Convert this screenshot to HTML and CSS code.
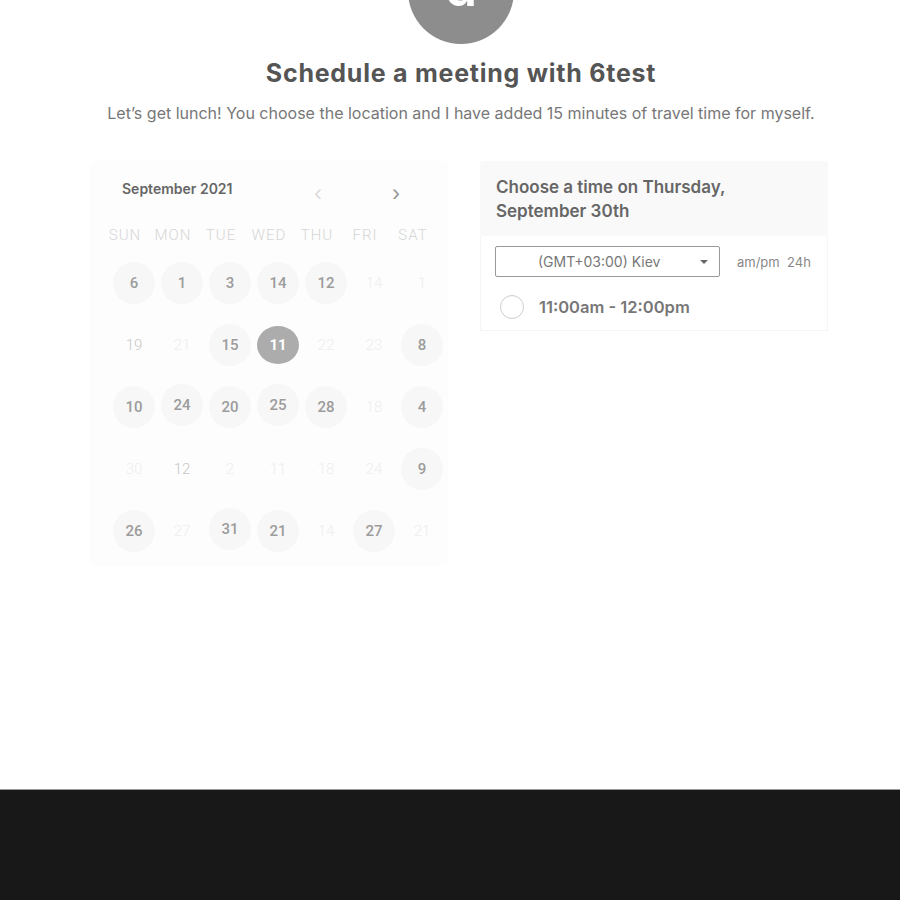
FILE: index.html
```html
<!DOCTYPE html>
<html>
<head>
<meta charset="utf-8">
<link rel="stylesheet" href="styles.css">
</head>
<body>
<main class="page">
  <div class="avatar"><span>d</span></div>
  <h1 class="title">Schedule a meeting with 6test</h1>
  <p class="subtitle">Let’s get lunch! You choose the location and I have added 15 minutes of travel time for myself.</p>
  <div class="columns">
    <section class="calendar">
      <div class="cal-head">
        <span class="month">September 2021</span>
        <span class="arrow prev">&lsaquo;</span>
        <span class="arrow next">&rsaquo;</span>
      </div>
      <div class="weekdays">
        <span>SUN</span><span>MON</span><span>TUE</span><span>WED</span><span>THU</span><span>FRI</span><span>SAT</span>
      </div>
      <div class="days">
        <span class="d pill">6</span><span class="d pill">1</span><span class="d pill">3</span><span class="d pill">14</span><span class="d pill">12</span><span class="d off">14</span><span class="d off">1</span>
        <span class="d dim">19</span><span class="d off">21</span><span class="d pill">15</span><span class="d sel">11</span><span class="d off">22</span><span class="d off">23</span><span class="d pill">8</span>
        <span class="d pill">10</span><span class="d pill up">24</span><span class="d pill">20</span><span class="d pill up">25</span><span class="d pill">28</span><span class="d off">18</span><span class="d pill">4</span>
        <span class="d off">30</span><span class="d dim">12</span><span class="d off">2</span><span class="d off">11</span><span class="d off">18</span><span class="d off">24</span><span class="d pill">9</span>
        <span class="d pill">26</span><span class="d off">27</span><span class="d pill up">31</span><span class="d pill">21</span><span class="d off">14</span><span class="d pill">27</span><span class="d off">21</span>
      </div>
    </section>
    <section class="times">
      <div class="times-head">Choose a time on Thursday,<br>September 30th</div>
      <div class="times-body">
        <div class="tz-row">
          <div class="select"><span>(GMT+03:00) Kiev</span><span class="caret"></span></div>
          <span class="fmt">am/pm&nbsp; 24h</span>
        </div>
        <div class="slot"><span class="radio"></span><span class="slot-text">11:00am - 12:00pm</span></div>
      </div>
    </section>
  </div>
</main>
<footer class="footer"></footer>
</body>
</html>
```
FILE: styles.css
```css
html, body { margin: 0; padding: 0; background: #fff; }
body { font-family: Inter, "Liberation Sans", Arial, sans-serif; overflow: hidden; }
.page { height: 789px; overflow: hidden; display: flex; flex-direction: column; align-items: center; }
.avatar {
  width: 106px; height: 106px; border-radius: 50%; background: #8d8d8d;
  margin-top: -62px; margin-left: 22px; flex: none;
  display: flex; justify-content: center; align-items: center; overflow: hidden;
}
.avatar span { color: #fff; font-family: Inter, "Liberation Sans", sans-serif; font-size: 52px; font-weight: 600; line-height: 1; margin-top: -6px; }
.title {
  margin: 14px 0 0 22px; font-size: 25px; font-weight: 700; color: #555;
  line-height: 30px; letter-spacing: 0.75px;
}
.subtitle { margin: 14px 0 0 22px; font-size: 16px; color: #777; line-height: 22px; font-weight: 400; }
.columns { display: flex; gap: 32px; margin-top: 37px; margin-left: 18px; align-items: flex-start; }
.calendar { width: 338px; padding: 16px 0 4px 20px; background: #fdfdfd; border-radius: 6px; }
.cal-head { display: flex; align-items: center; height: 22px; }
.month { font-size: 14px; font-weight: 600; color: #666; margin-left: 12px; width: 192px; }
.arrow { font-size: 24px; line-height: 22px; margin-top: 9px; font-family: "Liberation Sans", Arial, sans-serif; }
.prev { color: #ddd; width: 78px; }
.next { color: #999; }
.weekdays { display: grid; grid-template-columns: repeat(7, 48px); margin-top: 21px; margin-left: -9px; height: 30px; align-items: center; }
.weekdays span { text-align: center; font-family: Roboto, sans-serif; font-size: 15px; font-weight: 300; color: #d6d6d6; letter-spacing: 1px; }
.days { display: grid; grid-template-columns: repeat(7, 48px); grid-auto-rows: 62px; align-items: center; justify-items: center; margin-top: 2px; }
.d { width: 42px; height: 42px; border-radius: 50%; display: flex; align-items: center; justify-content: center; font-size: 15px; font-family: Roboto, sans-serif; }
.pill { background: #f7f7f7; color: #9c9c9c; font-weight: 500; }
.up { transform: translateY(-2px); }
.sel { background: #acacac; color: #fff; font-weight: 700; height: 38px; width: 42px; }
.dim { color: #c8c8c8; font-weight: 300; }
.off { color: #eee; font-weight: 300; }
.times { width: 348px; }
.times-head { background: #f9f9f9; padding: 14px 16px 13px; font-size: 17px; font-weight: 600; color: #666; line-height: 24px; border-radius: 4px; }
.times-body { background: #fff; border: 1px solid #f5f5f5; border-top: none; padding: 10px 14px 11px 14px; }
.tz-row { display: flex; align-items: center; }
.select {
  width: 223px; height: 29px; border: 1px solid #999; border-radius: 2px;
  display: flex; align-items: center; font-size: 14px; color: #777; position: relative;
}
.select span:first-child { margin-left: 42px; }
.caret { position: absolute; right: 11px; top: 13px; width: 0; height: 0; border-left: 4px solid transparent; border-right: 4px solid transparent; border-top: 4px solid #666; }
.fmt { margin-left: 17px; font-size: 13px; color: #888; }
.slot { display: flex; align-items: center; margin-top: 18px; }
.radio { width: 22px; height: 22px; border: 1px solid #ccc; border-radius: 50%; margin-left: 5px; }
.slot-text { margin-left: 15px; font-size: 16.5px; font-weight: 600; color: #777; }
.footer { height: 110px; background: #181818; border-top: 1px solid #9a9a9a; }
```
